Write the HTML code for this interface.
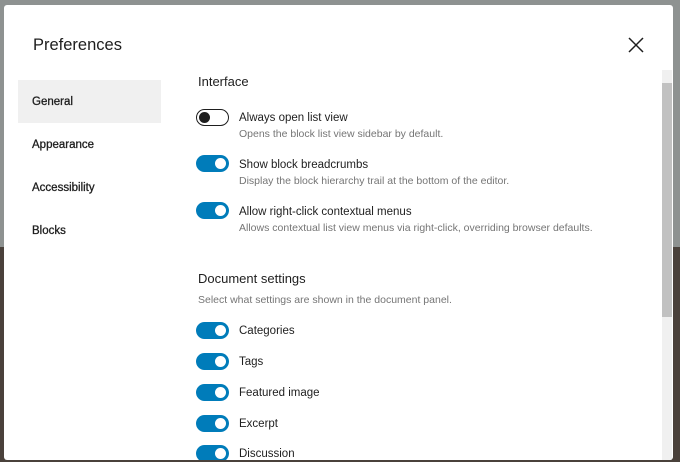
<!DOCTYPE html>
<html><head><style>
*{margin:0;padding:0;box-sizing:border-box}
body{width:680px;height:462px;overflow:hidden;position:relative;font-family:"Liberation Sans",sans-serif;background:#8e9291}
.bot{position:absolute;left:0;top:247px;width:680px;height:215px;background:#4a413b}
.modal{position:absolute;left:4px;top:5px;width:669px;height:455px;background:#fff;border-radius:3px;overflow:hidden}
.title{position:absolute;left:29px;top:31px;font-size:16.5px;color:#1e1e1e}
.close{position:absolute;left:624px;top:32px}
.nav{position:absolute;left:14px;top:75px;width:143px}
.nav div{height:43px;line-height:45px;padding-left:14px;font-size:11.5px;color:#1e1e1e;-webkit-text-stroke:0.3px #1e1e1e}
.nav .act{background:#f0f0f0}
.h{position:absolute;left:194px;font-size:13px;color:#1e1e1e}
.lab{position:absolute;left:235px;font-size:11.5px;color:#1e1e1e}
.desc{position:absolute;left:235px;font-size:10.5px;color:#757575}
.tg{position:absolute;left:192px;width:33px;height:17px;border-radius:9px;background:#007cba}
.tg::after{content:"";position:absolute;right:3px;top:3px;width:11px;height:11px;border-radius:50%;background:#fff}
.tg.off{background:#fff;border:1.5px solid #1e1e1e}
.tg.off::after{left:2px;top:2px;right:auto;background:#1e1e1e}
.sb{position:absolute;left:658px;top:65px;width:10px;height:390px;background:#f0f0f0}
.th{position:absolute;left:658px;top:78px;width:10px;height:234px;background:#c1c1c1}
</style></head><body>
<div class="bot"></div>
<div class="modal">
<div class="title">Preferences</div>
<svg class="close" width="16" height="16" viewBox="0 0 16 16"><path d="M1 1L15 15M15 1L1 15" stroke="#1e1e1e" stroke-width="1.5"/></svg>
<div class="nav"><div class="act">General</div><div>Appearance</div><div>Accessibility</div><div>Blocks</div></div>
<div class="h" style="top:69px">Interface</div>
<div class="tg off" style="top:104px"></div>
<div class="lab" style="top:107px">Always open list view</div>
<div class="desc" style="top:123px">Opens the block list view sidebar by default.</div>
<div class="tg" style="top:150px"></div>
<div class="lab" style="top:154px">Show block breadcrumbs</div>
<div class="desc" style="top:170px">Display the block hierarchy trail at the bottom of the editor.</div>
<div class="tg" style="top:197px"></div>
<div class="lab" style="top:201px">Allow right-click contextual menus</div>
<div class="desc" style="top:217px">Allows contextual list view menus via right-click, overriding browser defaults.</div>
<div class="h" style="top:266px">Document settings</div>
<div class="desc" style="top:289px;left:194px">Select what settings are shown in the document panel.</div>
<div class="tg" style="top:317px"></div><div class="lab" style="top:320px">Categories</div>
<div class="tg" style="top:348px"></div><div class="lab" style="top:351px">Tags</div>
<div class="tg" style="top:379px"></div><div class="lab" style="top:382px">Featured image</div>
<div class="tg" style="top:410px"></div><div class="lab" style="top:413px">Excerpt</div>
<div class="tg" style="top:440px"></div><div class="lab" style="top:443px">Discussion</div>
<div class="sb"></div><div class="th"></div>
</div>
</body></html>
